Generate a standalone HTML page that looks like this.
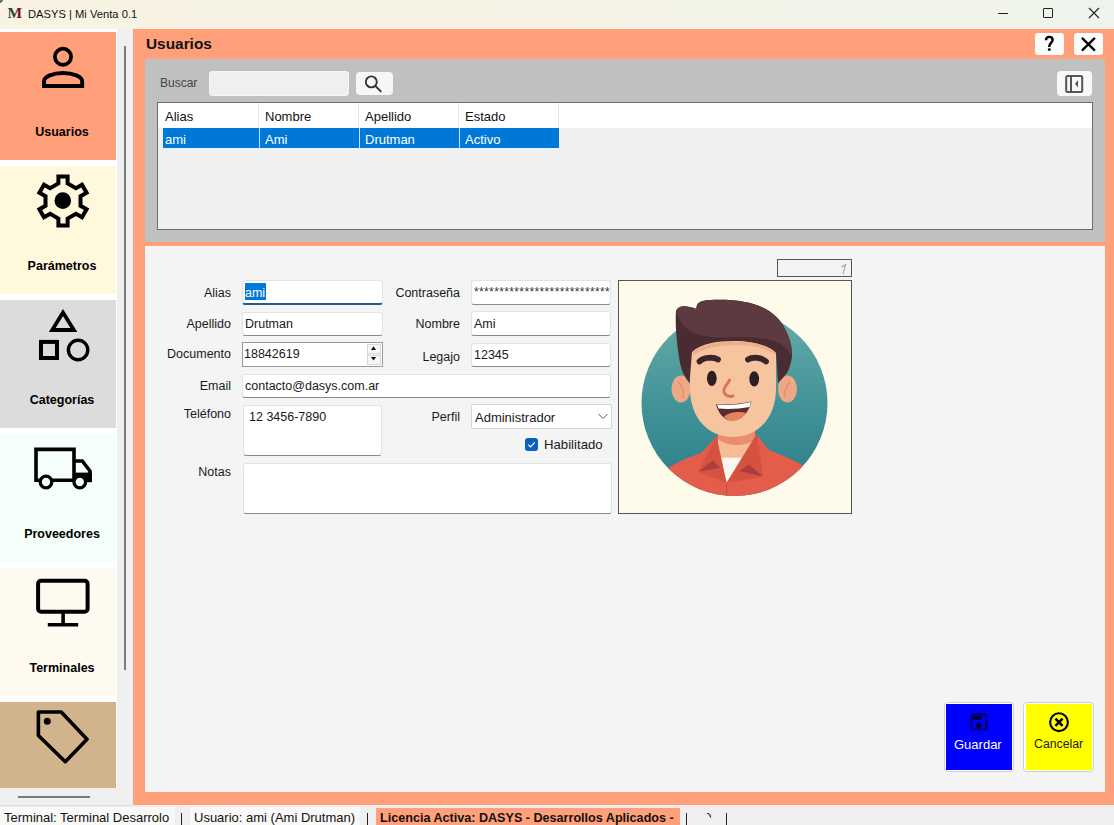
<!DOCTYPE html>
<html><head><meta charset="utf-8">
<style>
*{box-sizing:border-box;margin:0;padding:0}
html,body{width:1114px;height:825px;overflow:hidden;background:#f0f0f0;font-family:"Liberation Sans",sans-serif;color:#000}
.a{position:absolute}
.t{position:absolute;white-space:pre;line-height:1}
#titlebar{left:0;top:0;width:1114px;height:29px;background:linear-gradient(90deg,#f8f3e2 0%,#f6f3e6 50%,#eef4ec 100%)}
.tile{position:absolute;left:0;width:116px;height:128px}
.tl{position:absolute;left:0;width:124px;text-align:center;font-weight:700;font-size:12.5px;line-height:1}
.inp{position:absolute;background:#fff;border:1px solid #e3e3e3;border-bottom:1px solid #8a8a8a;border-radius:3px}
.lbl{position:absolute;font-size:12.5px;line-height:1;white-space:pre;color:#1a1a1a;text-align:right}
.val{position:absolute;font-size:12.5px;line-height:1;white-space:pre;color:#1a1a1a}
</style></head>
<body>
<!-- title bar -->
<div id="titlebar" class="a"></div>
<div class="a" style="left:-5px;top:-5px;width:8px;height:8px;border-radius:50%;border:2px solid #555"></div>
<svg class="a" style="left:6px;top:4px" width="20" height="18" viewBox="0 0 20 18"><defs><linearGradient id="mg" x1="0" y1="0" x2="1" y2="0"><stop offset="0" stop-color="#3a3a2a"/><stop offset="0.45" stop-color="#1f4a1f"/><stop offset="0.6" stop-color="#6a1a1a"/><stop offset="1" stop-color="#7a1010"/></linearGradient></defs><text x="1.5" y="14.3" font-family="Liberation Serif" font-weight="700" font-size="15.5" fill="url(#mg)">M</text></svg>
<div class="t" style="left:28px;top:9px;font-size:11.2px;color:#111">DASYS | Mi Venta 0.1</div>
<div class="a" style="left:998px;top:13px;width:10px;height:1px;background:#222"></div>
<div class="a" style="left:1043px;top:8px;width:10px;height:10px;border:1px solid #222;border-radius:1px"></div>
<svg class="a" style="left:1088px;top:7px" width="12" height="12" viewBox="0 0 12 12"><path d="M1 1L11 11M11 1L1 11" stroke="#222" stroke-width="1.1"/></svg>

<!-- sidebar -->
<div class="a" style="left:0;top:29px;width:117px;height:759px;background:#fff"></div>
<div class="tile" style="top:32px;background:#ffa07a"></div>
<div class="tile" style="top:166px;background:#fff8dc"></div>
<div class="tile" style="top:300px;background:#dcdcdc"></div>
<div class="tile" style="top:434px;background:#f5fffa"></div>
<div class="tile" style="top:568px;background:#fffaf0"></div>
<div class="tile" style="top:702px;height:86px;background:#d2b48c"></div>
<div class="tl" style="top:126px">Usuarios</div>
<div class="tl" style="top:260px">Parámetros</div>
<div class="tl" style="top:394px">Categorías</div>
<div class="tl" style="top:528px">Proveedores</div>
<div class="tl" style="top:662px">Terminales</div>
<!-- sidebar icons -->
<svg class="a" style="left:0;top:0" width="117" height="790" viewBox="0 0 117 790" fill="none" stroke="#000">
<circle cx="63" cy="56.8" r="8.1" stroke-width="3.7"/>
<path d="M44 86L44 81.5C44 76.5 53 73 63 73C73 73 82.2 76.5 82.2 81.5L82.2 86Z" stroke-width="3.9" stroke-linejoin="miter"/>
<path d="M58.4 183.4 L58.4 176.4 L67.6 176.4 L67.6 183.4 L75.9 188.2 L82.0 184.7 L86.6 192.7 L80.5 196.2 L80.5 205.8 L86.6 209.3 L82.0 217.3 L75.9 213.8 L67.6 218.6 L67.6 225.6 L58.4 225.6 L58.4 218.6 L50.1 213.8 L44.0 217.3 L39.4 209.3 L45.5 205.8 L45.5 196.2 L39.4 192.7 L44.0 184.7 L50.1 188.2Z" stroke-width="4"/>
<circle cx="62.8" cy="200.6" r="8.3" fill="#000" stroke="none"/>
<path d="M63 312.5L52.2 330L73.9 330Z" stroke-width="3.8"/>
<rect x="41" y="341.9" width="16" height="16.1" stroke-width="4"/>
<circle cx="78.1" cy="350" r="9.7" stroke-width="3.4"/>
<path d="M90 480.3H36V449.4H74V480.3M74 461H82.3L90 471V482" stroke-width="3.6"/>
<rect x="74" y="472.6" width="17.9" height="9.6" fill="#000" stroke="none"/>
<circle cx="46" cy="482" r="5.8" stroke-width="3.3" fill="#f5fffa"/>
<circle cx="79.8" cy="482" r="5.8" stroke-width="3.3" fill="#f5fffa"/>
<rect x="38.1" y="580.7" width="49.5" height="31" rx="3" stroke-width="4"/>
<path d="M63.1 612V624M47.8 624.8H78.2" stroke-width="3.6"/>
<path d="M38.4 712V735.5L65.3 761.7L87 739.3L61.2 712Z" stroke-width="3.6" stroke-linejoin="round"/>
<circle cx="47.3" cy="721.3" r="3.5" fill="#000" stroke="none"/>
</svg>
<!-- scrollbars -->
<div class="a" style="left:124px;top:46px;width:2px;height:624px;background:#7a7a7a"></div>
<div class="a" style="left:18px;top:796px;width:72px;height:2px;background:#7a7a7a"></div>

<!-- main panel -->
<div class="a" style="left:133px;top:29px;width:981px;height:776px;background:#ffa07a"></div>
<div class="t" style="left:146px;top:36.2px;font-size:15.4px;font-weight:700;color:#111">Usuarios</div>
<div class="a" style="left:1035px;top:33px;width:29px;height:22px;background:#fcfcfc;border-radius:3px"></div>
<div class="a" style="left:1074px;top:33px;width:29px;height:22px;background:#fcfcfc;border-radius:3px"></div>
<svg class="a" style="left:1035px;top:33px" width="29" height="22" viewBox="1035 33 29 22"><path d="M1046 40.2C1046 38 1047.6 36.9 1049.3 36.9C1051.2 36.9 1052.6 38.2 1052.6 40C1052.6 42.6 1049.3 43.3 1049.3 46.3V47" fill="none" stroke="#000" stroke-width="2.4"/><circle cx="1049.3" cy="49.6" r="1.45" fill="#000"/></svg>
<svg class="a" style="left:1074px;top:33px" width="29" height="22" viewBox="0 0 29 22"><path d="M7.9 4.9L20.9 17.6M20.9 4.9L7.9 17.6" stroke="#000" stroke-width="2.3"/></svg>

<!-- search area -->
<div class="a" style="left:145px;top:59px;width:960px;height:183px;background:#c0c0c0"></div>
<div class="t" style="left:160px;top:77px;font-size:12px;color:#444">Buscar</div>
<div class="a" style="left:209px;top:71px;width:140px;height:25px;background:#efefef;border-radius:3px;border:1px solid #f6f6f6"></div>
<div class="a" style="left:356px;top:72px;width:37px;height:23px;background:#f6f6f6;border-radius:4px"></div>
<svg class="a" style="left:356px;top:72px" width="37" height="23" viewBox="0 0 37 23" fill="none" stroke="#333"><circle cx="15.3" cy="9.9" r="5.5" stroke-width="1.9"/><path d="M19.3 13.9L25.3 19.9" stroke-width="2"/></svg>
<div class="a" style="left:1057px;top:71px;width:35px;height:25px;background:#f8f8f8;border-radius:4px"></div>
<svg class="a" style="left:1057px;top:71px" width="35" height="25" viewBox="0 0 35 25" fill="none" stroke="#555"><rect x="9.2" y="5" width="16" height="16" rx="1.5" stroke-width="2"/><path d="M14 5V21" stroke-width="2"/><path d="M21 9L18 12.8L21 16.5Z" fill="#555" stroke="none"/></svg>

<!-- table -->
<div class="a" style="left:157px;top:102px;width:936px;height:128px;background:#f0f0f0;border:1px solid #6e6e6e"></div>
<div class="a" style="left:158px;top:103px;width:934px;height:25px;background:#fff"></div>
<div class="a" style="left:163px;top:128px;width:396px;height:20px;background:#0078d7"></div>
<div class="a" style="left:258px;top:103px;width:1px;height:25px;background:#e5e5e5"></div>
<div class="a" style="left:358px;top:103px;width:1px;height:25px;background:#e5e5e5"></div>
<div class="a" style="left:458px;top:103px;width:1px;height:25px;background:#e5e5e5"></div>
<div class="a" style="left:558px;top:103px;width:1px;height:25px;background:#e5e5e5"></div>
<div class="a" style="left:259px;top:128px;width:1px;height:20px;background:#cfe6f8"></div>
<div class="a" style="left:359px;top:128px;width:1px;height:20px;background:#cfe6f8"></div>
<div class="a" style="left:459px;top:128px;width:1px;height:20px;background:#cfe6f8"></div>
<div class="t" style="left:165px;top:110px;font-size:13px;color:#111">Alias</div>
<div class="t" style="left:265px;top:110px;font-size:13px;color:#111">Nombre</div>
<div class="t" style="left:365px;top:110px;font-size:13px;color:#111">Apellido</div>
<div class="t" style="left:465px;top:110px;font-size:13px;color:#111">Estado</div>
<div class="t" style="left:165px;top:133px;font-size:13px;color:#fff">ami</div>
<div class="t" style="left:265px;top:133px;font-size:13px;color:#fff">Ami</div>
<div class="t" style="left:365px;top:133px;font-size:13px;color:#fff">Drutman</div>
<div class="t" style="left:465px;top:133px;font-size:13px;color:#fff">Activo</div>

<!-- form area -->
<div class="a" style="left:145px;top:246px;width:960px;height:546px;background:#f4f4f4"></div>
<div class="lbl" style="right:883px;top:287px">Alias</div>
<div class="lbl" style="right:883px;top:318px">Apellido</div>
<div class="lbl" style="right:883px;top:348px">Documento</div>
<div class="lbl" style="right:883px;top:380px">Email</div>
<div class="lbl" style="right:883px;top:408px">Teléfono</div>
<div class="lbl" style="right:883px;top:466px">Notas</div>
<div class="lbl" style="right:654px;top:287px">Contraseña</div>
<div class="lbl" style="right:654px;top:318px">Nombre</div>
<div class="lbl" style="right:654px;top:351px">Legajo</div>
<div class="lbl" style="right:654px;top:411px">Perfil</div>

<div class="inp" style="left:242px;top:280px;width:141px;height:25px;border-bottom:2px solid #1d5e96"></div>
<div class="a" style="left:245px;top:283px;width:21px;height:17px;background:#0078d7"></div>
<div class="val" style="left:245px;top:287px;color:#fff">ami</div>
<div class="inp" style="left:242px;top:312px;width:141px;height:24px"></div>
<div class="val" style="left:245px;top:318px">Drutman</div>
<div class="a" style="left:242px;top:342px;width:141px;height:25px;background:#fff;border:1px solid #9a9a9a"></div>
<div class="val" style="left:244px;top:348px">18842619</div>
<div class="a" style="left:367px;top:344px;width:14px;height:21px;background:#f0f0f0"></div>
<div class="a" style="left:367px;top:344px;width:14px;height:10px;border:1px solid #d8d8d8;background:#f6f6f6"></div>
<div class="a" style="left:367px;top:355px;width:14px;height:10px;border:1px solid #d8d8d8;background:#f6f6f6"></div>
<svg class="a" style="left:367px;top:344px" width="14" height="21" viewBox="0 0 14 21"><path d="M3.9 6L6.5 2.3L9.1 6Z M3.9 12.9L6.5 16.6L9.1 12.9Z" fill="#111"/></svg>
<div class="inp" style="left:242px;top:374px;width:369px;height:24px"></div>
<div class="val" style="left:245px;top:380px">contacto@dasys.com.ar</div>
<div class="inp" style="left:243px;top:405px;width:139px;height:51px"></div>
<div class="val" style="left:249px;top:411px">12 3456-7890</div>
<div class="inp" style="left:243px;top:463px;width:369px;height:51px"></div>

<div class="inp" style="left:471px;top:280px;width:140px;height:25px"></div>
<div class="val" style="left:474px;top:286px;font-size:12px;letter-spacing:0.37px;color:#333">***************************</div>
<div class="inp" style="left:471px;top:311px;width:140px;height:25px"></div>
<div class="val" style="left:474px;top:318px">Ami</div>
<div class="inp" style="left:471px;top:343px;width:140px;height:24px"></div>
<div class="val" style="left:474px;top:349px">12345</div>
<div class="a" style="left:471px;top:404px;width:141px;height:25px;background:#fff;border:1px solid #d6d6d6;border-radius:2px"></div>
<div class="val" style="left:475px;top:411px;font-size:13px">Administrador</div>
<svg class="a" style="left:597px;top:411px" width="12" height="10" viewBox="0 0 12 10"><path d="M1.5 3L6 7.5L10.5 3" fill="none" stroke="#555" stroke-width="1"/></svg>
<div class="a" style="left:525px;top:438px;width:13px;height:13px;background:#0a5fc0;border-radius:3px"></div>
<svg class="a" style="left:525px;top:438px" width="13" height="13" viewBox="0 0 13 13"><path d="M3.3 6.7L5.5 8.9L9.8 4.3" fill="none" stroke="#fff" stroke-width="1.1"/></svg>
<div class="val" style="left:544px;top:438px;font-size:13.2px">Habilitado</div>

<div class="a" style="left:777px;top:259px;width:75px;height:18px;background:#f3f3f3;border:1px solid #555"></div>
<svg class="a" style="left:838px;top:262px" width="10" height="14" viewBox="838 262 10 14"><path d="M841.3 267.3L845.6 264.6L843 274.2" fill="none" stroke="#a8a8a8" stroke-width="1.2"/></svg>
<div class="a" style="left:618px;top:280px;width:234px;height:234px;background:#fffbea;border:1px solid #555"></div>
<svg class="a" style="left:619px;top:281px" width="232" height="232" viewBox="619 281 232 232">
<defs>
<linearGradient id="tg" x1="0" y1="0" x2="0" y2="1"><stop offset="0" stop-color="#66aca8"/><stop offset="0.55" stop-color="#3f9197"/><stop offset="1" stop-color="#2c7c89"/></linearGradient>
<clipPath id="cc"><circle cx="734.5" cy="403" r="93"/></clipPath>
</defs>
<circle cx="734.5" cy="403" r="93" fill="url(#tg)"/>
<g clip-path="url(#cc)">
<path d="M655 520L660 474C670 465 688 457 701 453L716 437L756 434L769 450C782 455 797 461 808 469L812 520Z" fill="#e35d4a"/>

<path d="M726.6 483L726.6 500" stroke="#c24a40" stroke-width="0.8"/>
</g>
<rect x="718" y="420" width="37" height="40" fill="#f6bd98"/>
<path d="M718 428H755V439C746 447 728 447 718 439Z" fill="#ea8d6e"/>
<path d="M719 457.7L745.4 457.7L726.6 482.8Z" fill="#fbf6ee"/>
<path d="M716.5 436.3L698.3 471.5L726.6 482.8Z" fill="#d4523f"/>
<path d="M698.3 471.5L713 460.5L720 468Z" fill="#ad3d3c"/>
<path d="M756.7 433.8L763 476.5L726.6 482.8Z" fill="#d4523f"/>
<path d="M763 476.5L749 464.5L739 471Z" fill="#ad3d3c"/>
<ellipse cx="681" cy="389" rx="9.5" ry="13.5" fill="#efa885"/>
<ellipse cx="787.5" cy="389" rx="9.5" ry="13.5" fill="#efa885"/>
<path d="M678 382C682 386 684 392 683 398" fill="none" stroke="#dd8d6c" stroke-width="1.2"/>
<path d="M790 382C786 386 784 392 785 398" fill="none" stroke="#dd8d6c" stroke-width="1.2"/>
<path d="M690 352C690 336 776 336 776 352L776 388C776 418 758 437 733 437C708 437 690 418 690 388Z" fill="#f7c4a0"/>
<path d="M676 311C678 305 686 305 696.5 309C696 303 700 300.5 710 300C742 298.5 770 304 783 325C791 339 793 352 791.5 360L789 369C786 375 782 379 778 383L776 353C770 346 752 341 735 341C716 341 700 344 692 352L689.5 383C684 376 681 370 679.5 360C677 345 675 326 676 311Z" fill="#4a2b31"/>
<path d="M676 311C678 305 686 305 696.5 309C696 303 700 300.5 710 300C742 298.5 770 304 783 325C791 339 793 350 791 355C786 346 778 341 766 339C752 336.5 740 337.5 726 337.5C712 337.5 700 336.5 690 331C683 326 678 319 676 311Z" fill="#5c3a40"/>
<path d="M693 352C703 344 718 341.5 736 341.5C754 341.5 768 345 776 353L776 355.5C767 348.5 753 345 736 345C719 345 704 348 693 355.5Z" fill="#eeae8d"/>
<path d="M699.5 361.5C703 357.5 713 356.5 718 359.5" fill="none" stroke="#3e2429" stroke-width="5.8" stroke-linecap="round"/>
<path d="M748 359.5C753 356.5 762 357.5 766 361.5" fill="none" stroke="#3e2429" stroke-width="5.8" stroke-linecap="round"/>
<ellipse cx="711.8" cy="378.3" rx="4.9" ry="7.6" fill="#2f1d22"/>
<ellipse cx="754.2" cy="378.8" rx="4.9" ry="7.6" fill="#2f1d22"/>
<path d="M729.5 380C728 384 723 387 724 392C725 396 730 397 733 396" fill="none" stroke="#d8735a" stroke-width="3" stroke-linecap="round"/>
<path d="M716 404C725 405 740 404 751.5 401.5C749 412 742 420 733 420.5C724 421 718 413 716 404Z" fill="#5b2b30"/>
<path d="M717 404.5C726 405.5 741 404.5 751 402L749.5 407C740 409 727 409.5 718.5 408.5Z" fill="#ffffff"/>
<path d="M724 417C728 412 740 411 746 413C742 419 736 421 733 421C729 421 726 419 724 417Z" fill="#e6835f"/>
</svg>

<!-- action buttons -->
<div class="a" style="left:944px;top:702px;width:70px;height:70px;background:#fff;border:1px solid #d0d0d0;border-radius:4px"></div>
<div class="a" style="left:946px;top:704px;width:66px;height:66px;background:#0000ff"></div>
<svg class="a" style="left:969px;top:712px" width="20" height="20" viewBox="969 712 20 20"><rect x="971.4" y="714.3" width="15.1" height="15.1" rx="1.5" fill="none" stroke="#000070" stroke-width="2.3"/><rect x="972.7" y="716" width="9" height="3.7" fill="#000030"/><circle cx="979" cy="725.2" r="2.7" fill="#000030"/></svg>
<div class="t" style="left:954px;top:738px;font-size:13px;color:#fff">Guardar</div>
<div class="a" style="left:1023px;top:702px;width:71px;height:70px;background:#fff;border:1px solid #d0d0d0;border-radius:4px"></div>
<div class="a" style="left:1026px;top:704px;width:66px;height:66px;background:#ffff00"></div>
<svg class="a" style="left:1047px;top:711px" width="24" height="24" viewBox="0 0 24 24" fill="none" stroke="#000"><circle cx="12" cy="11.2" r="8.9" stroke-width="2.1"/><path d="M8.4 7.6L15.6 14.8M15.6 7.6L8.4 14.8" stroke-width="2.5"/></svg>
<div class="t" style="left:1034px;top:738px;font-size:12.3px;color:#222">Cancelar</div>

<!-- status bar -->
<div class="a" style="left:0;top:805px;width:1114px;height:20px;background:#efefef"></div>
<div class="a" style="left:0;top:805px;width:133px;height:1px;background:#dcdcdc"></div>
<div class="a" style="left:0;top:807px;width:175px;height:18px;background:#f8f8f6"></div>
<div class="t" style="left:4px;top:811px;font-size:13px;color:#111">Terminal: Terminal Desarrolo</div>
<div class="a" style="left:181px;top:813px;width:1px;height:12px;background:#222"></div>
<div class="a" style="left:190px;top:807px;width:170px;height:18px;background:#f8f8f6"></div>
<div class="t" style="left:194px;top:811px;font-size:13px;color:#111">Usuario: ami (Ami Drutman)</div>
<div class="a" style="left:367px;top:813px;width:1px;height:12px;background:#222"></div>
<div class="a" style="left:376px;top:808px;width:304px;height:17px;background:#ffa07a"></div>
<div class="t" style="left:380px;top:812px;font-size:12.6px;font-weight:700;color:#111">Licencia Activa: DASYS - Desarrollos Aplicados -</div>
<div class="a" style="left:686px;top:813px;width:1px;height:12px;background:#222"></div>
<svg class="a" style="left:704px;top:811px" width="10" height="10" viewBox="0 0 10 10"><path d="M3 2.5C5 2.5 6.5 4 6.5 6.5" fill="none" stroke="#222" stroke-width="1.2"/></svg>
<div class="a" style="left:726px;top:813px;width:1px;height:12px;background:#222"></div>
</body></html>
